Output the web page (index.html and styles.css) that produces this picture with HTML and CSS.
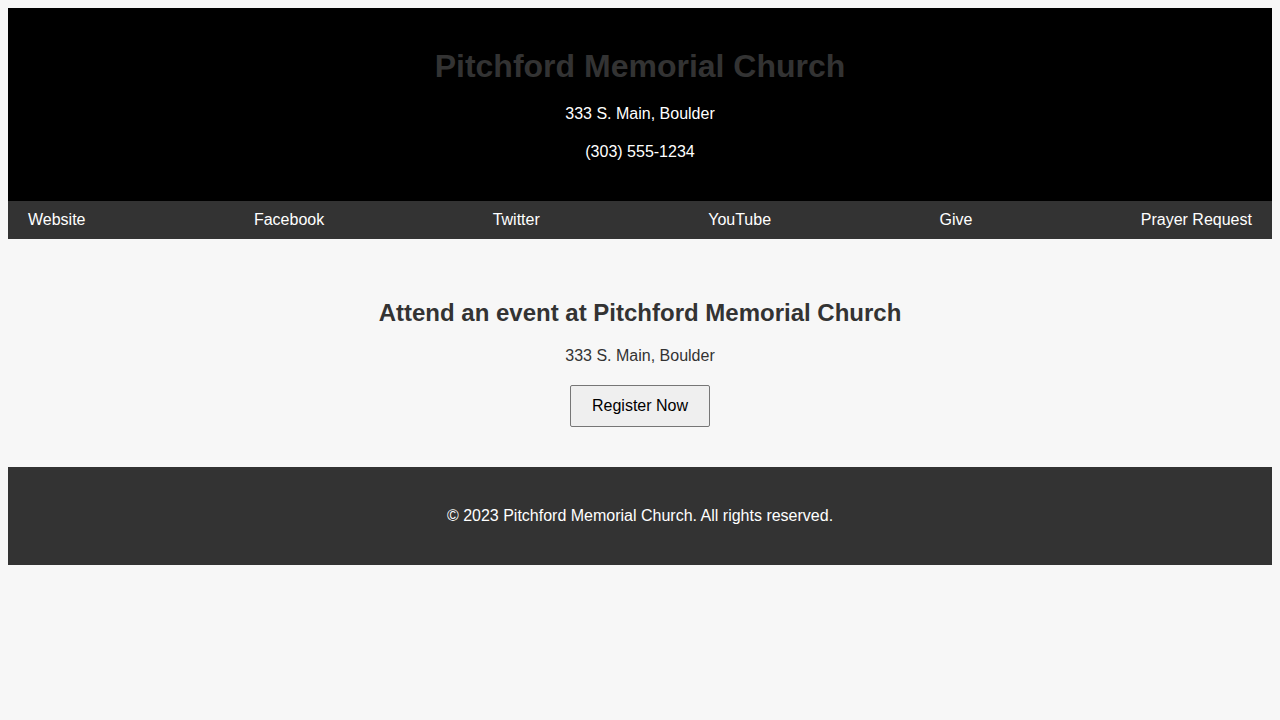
FILE: index.html
```html
<!DOCTYPE html>
<html lang="en">
<head>
<meta charset="utf-8">
<title>Pitchford Memorial Church</title>
<link rel="stylesheet" href="styles.css">
</head>
<body>
<header class="site-header">
  <h1 class="site-title">Pitchford Memorial Church</h1>
  <p class="header-line">333 S. Main, Boulder</p>
  <p class="header-line">(303) 555-1234</p>
</header>
<nav class="site-nav">
  <a class="nav-link" href="#">Website</a>
  <a class="nav-link" href="#">Facebook</a>
  <a class="nav-link" href="#">Twitter</a>
  <a class="nav-link" href="#">YouTube</a>
  <a class="nav-link" href="#">Give</a>
  <a class="nav-link" href="#">Prayer Request</a>
</nav>
<main class="event">
  <h2 class="event-title">Attend an event at Pitchford Memorial Church</h2>
  <p class="event-address">333 S. Main, Boulder</p>
  <div class="event-action"><button class="register-btn" type="button">Register Now</button></div>
</main>
<footer class="site-footer">
  <p class="footer-text">© 2023 Pitchford Memorial Church. All rights reserved.</p>
</footer>
</body>
</html>
```
FILE: styles.css
```css
body {
  margin: 8px;
  background: #f7f7f7;
  font-family: "Liberation Sans", Arial, Helvetica, sans-serif;
  font-size: 16px;
  color: #333;
}
.site-header {
  background: #000;
  text-align: center;
  padding: 20px 0;
}
.site-title {
  margin: 20px 0 21px;
  font-size: 32px;
  font-weight: bold;
  color: #333;
  line-height: 36px;
}
.header-line {
  margin: 20px 0;
  color: #fff;
  line-height: 18px;
}
.site-nav {
  background: #333;
  display: flex;
  justify-content: space-between;
  padding: 10px 20px;
  line-height: 18px;
}
.nav-link {
  color: #fff;
  text-decoration: none;
}
.event {
  display: block;
  text-align: center;
  padding: 40px 0;
}
.event-title {
  margin: 20px 0;
  font-size: 24px;
  line-height: 28px;
  color: #333;
}
.event-address {
  margin: 20px 0 20px;
  line-height: 18px;
}
.event-action {
  display: flex;
  justify-content: center;
}
.register-btn {
  font-family: "Liberation Sans", Arial, sans-serif;
  font-size: 16px;
  line-height: 20px;
  padding: 10px 20px;
  background: #efefef;
  color: #000;
  border: 1px solid #767676;
  border-radius: 2px;
  width: 140px;
}
.site-footer {
  background: #333;
  text-align: center;
  padding: 40px 0;
}
.footer-text {
  margin: 0;
  color: #fff;
  line-height: 18px;
}
```
